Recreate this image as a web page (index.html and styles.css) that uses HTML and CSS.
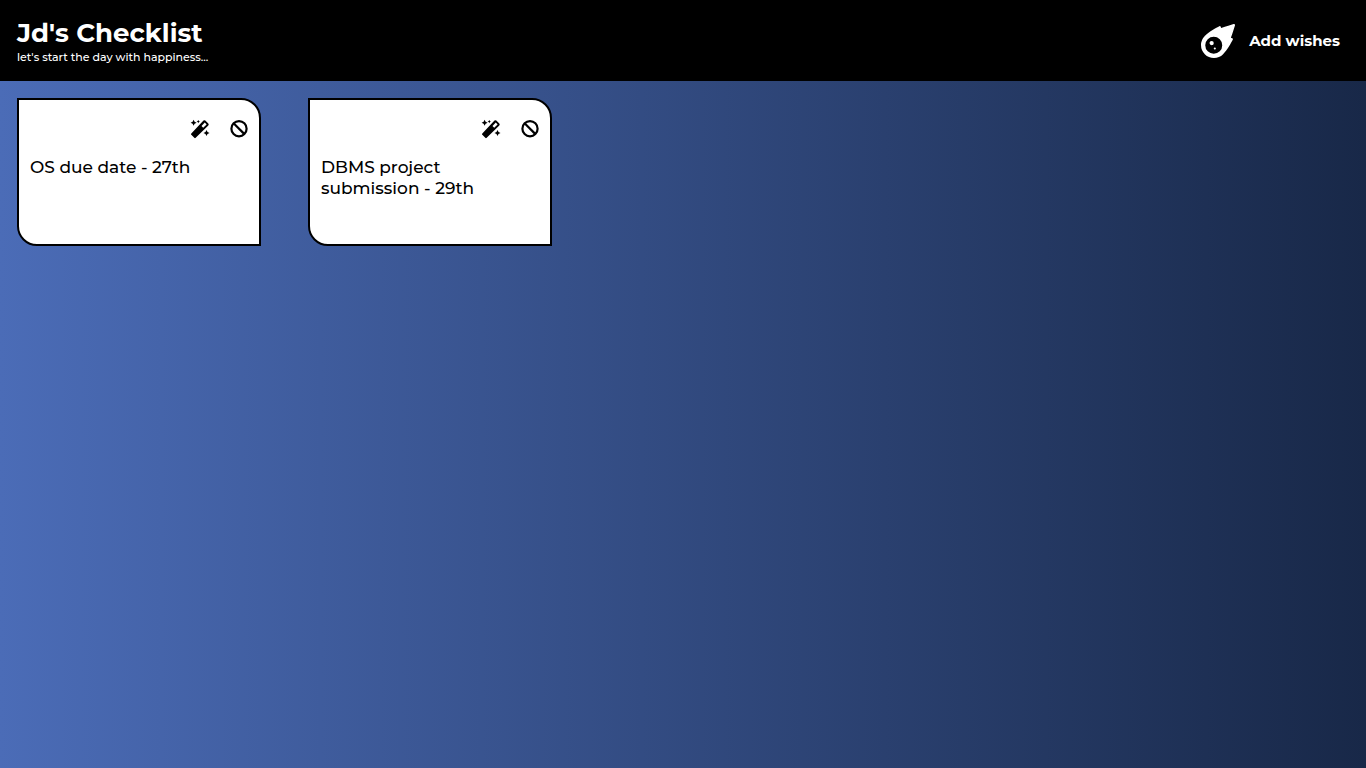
FILE: index.html
```html
<!DOCTYPE html>
<html lang="en">
<head>
<meta charset="utf-8">
<meta name="viewport" content="width=device-width, initial-scale=1">
<title>Jd's Checklist</title>
<link rel="stylesheet" href="styles.css">
</head>
<body>
<svg class="sprite" aria-hidden="true">
  <symbol id="wand" viewBox="0 0 20 20">
    <path fill-rule="evenodd" d="M1.3 14.4 13.5 1.6q.9-.9 1.8 0l3 3q.9.9 0 1.8L5.7 18.8q-.7.7-1.4 0l-3-3q-.7-.7 0-1.4ZM11.5 7.1l1.7 1.7 3.4-3.4-1.8-1.8Z"/>
    <path d="m3.6.8 1 2 2 1-2 1-1 2-1-2-2-1 2-1ZM8.3 1l.6 1.1 1.1.5-1.1.5-.6 1.2-.6-1.2-1.1-.5 1.1-.5ZM16.5 11l1 2 2 1-2 1-1 2-1-2-2-1 2-1Z"/>
  </symbol>
  <symbol id="ban" viewBox="0 0 20 20">
    <g fill="none" stroke="currentColor" stroke-width="2.2"><circle cx="10" cy="9.7" r="7.6"/><path d="m4.6 4.3 10.8 10.8"/></g>
  </symbol>
</svg>
<header class="header">
  <div class="brand">
    <h1 class="title">Jd's Checklist</h1>
    <p class="tagline">let's start the day with happiness...</p>
  </div>
  <button class="add" type="button">
    <svg class="meteor" viewBox="0 0 512 512" aria-hidden="true"><path d="M511.328,20.8027c-11.60759,38.70264-34.30724,111.70173-61.30311,187.70077,6.99893,2.09372,13.4042,4,18.60653,5.59368a16.06158,16.06158,0,0,1,9.49854,22.906c-22.106,42.29635-82.69047,152.795-142.47819,214.40356-.99984,1.09373-1.99969,2.5-2.99954,3.49995A194.83046,194.83046,0,1,1,57.085,179.41009c.99985-1,2.40588-2,3.49947-3,61.59994-59.90549,171.97367-120.40473,214.37343-142.4982a16.058,16.058,0,0,1,22.90274,9.49988c1.59351,5.09368,3.49947,11.5936,5.5929,18.59351C379.34818,35.00565,452.43074,12.30281,491.12794.70921A16.18325,16.18325,0,0,1,511.328,20.8027ZM319.951,320.00207A127.98041,127.98041,0,1,0,191.97061,448.00046,127.97573,127.97573,0,0,0,319.951,320.00207Zm-127.98041-31.9996a31.9951,31.9951,0,1,1-31.9951-31.9996A31.959,31.959,0,0,1,191.97061,288.00247Zm31.9951,79.999a15.99755,15.99755,0,1,1-15.99755-15.9998A16.04975,16.04975,0,0,1,223.96571,368.00147Z"/></svg>
    <span>Add wishes</span>
  </button>
</header>
<main class="cards">
  <article class="card">
    <div class="actions">
      <button class="action" type="button" aria-label="Edit"><svg class="icon"><use href="#wand"/></svg></button>
      <button class="action" type="button" aria-label="Remove"><svg class="icon"><use href="#ban"/></svg></button>
    </div>
    <p class="text">OS due date - 27th</p>
  </article>
  <article class="card">
    <div class="actions">
      <button class="action" type="button" aria-label="Edit"><svg class="icon"><use href="#wand"/></svg></button>
      <button class="action" type="button" aria-label="Remove"><svg class="icon"><use href="#ban"/></svg></button>
    </div>
    <p class="text">DBMS project submission - 29th</p>
  </article>
</main>
</body>
</html>
```
FILE: styles.css
```css
* {
  box-sizing: border-box;
  margin: 0;
  padding: 0;
}

body {
  min-height: 100vh;
  font-family: Montserrat, Inter, sans-serif;
  background: linear-gradient(to right, #4b6cb7, #182848);
}

.sprite {
  display: none;
}

button {
  border: 0;
  background: none;
  color: inherit;
  font: inherit;
  cursor: pointer;
}

.header {
  display: flex;
  justify-content: space-between;
  align-items: center;
  padding: 17px 26px 17px 17px;
  background: #000;
  color: #fff;
}

.title {
  font-size: 26px;
  line-height: 33px;
  font-weight: 700;
}

.tagline {
  font-size: 11px;
  line-height: 14px;
  font-weight: 500;
}

.add {
  display: flex;
  align-items: center;
  gap: 14px;
  font-size: 15px;
  line-height: 18px;
  font-weight: 700;
}

.meteor {
  width: 34px;
  height: 34px;
  fill: currentColor;
}

.cards {
  display: flex;
  flex-wrap: wrap;
  gap: 47px;
  padding: 17px;
}

.card {
  width: 244px;
  min-height: 148px;
  padding: 19px 10px 19px 11px;
  border: 2px solid #000;
  border-radius: 0 20px 0 20px;
  background: #fff;
  color: #000;
}

.actions {
  display: flex;
  justify-content: flex-end;
  gap: 19px;
}

.action,
.icon {
  display: block;
  width: 20px;
  height: 20px;
}

.icon {
  fill: currentColor;
}

.text {
  margin-top: 18px;
  font-size: 17px;
  line-height: 21px;
  font-weight: 500;
}
```
